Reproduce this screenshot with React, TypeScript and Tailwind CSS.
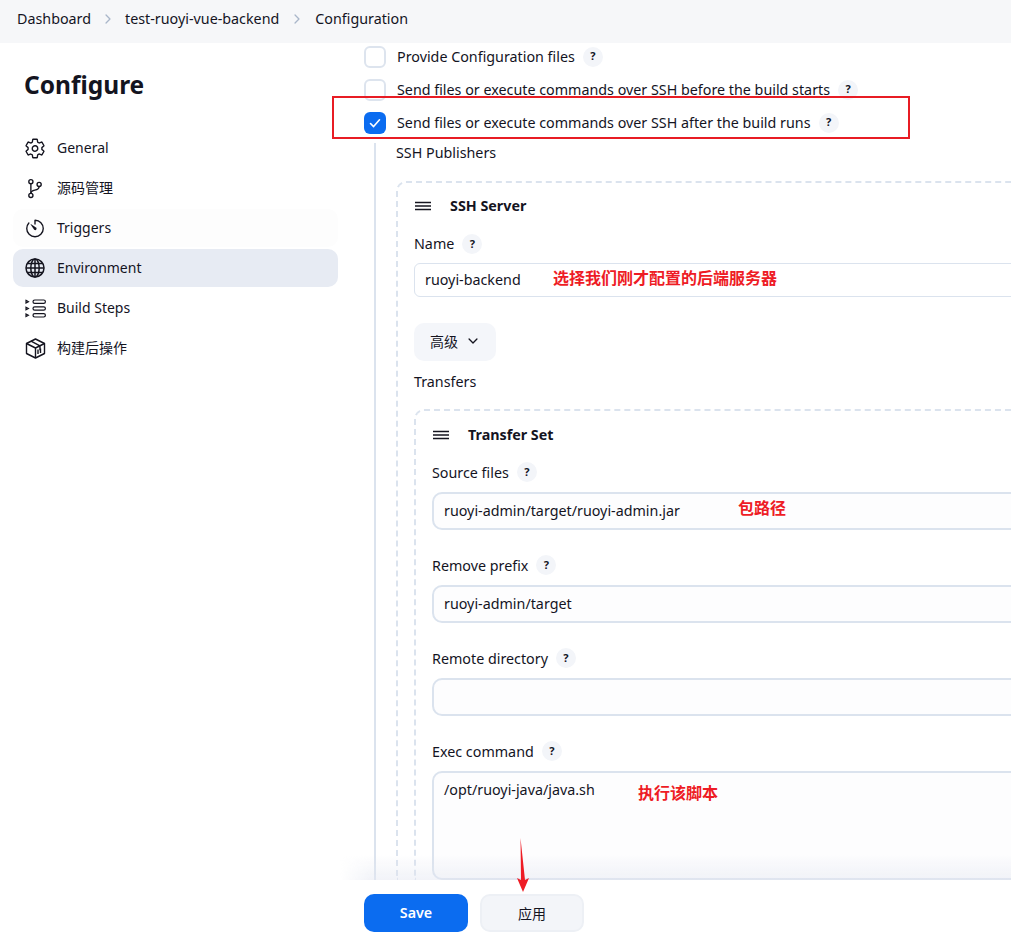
import React from "react";
import { IoSettingsOutline, IoGitBranchOutline, IoTimerOutline, IoChevronDown, IoChevronForward } from "react-icons/io5";

const font = { fontFamily: '"Noto Sans","Noto Sans CJK SC",sans-serif' };

function Help() {
  return (
    <span className="ml-2 inline-flex h-5 w-5 shrink-0 items-center justify-center rounded-full bg-[#f3f5f9] text-[11px] font-bold text-[#14141f]">?</span>
  );
}

function Check({ label, checked }: { label: string; checked?: boolean }) {
  return (
    <div className="flex h-[33px] items-center">
      {checked ? (
        <span className="flex h-[22px] w-[22px] items-center justify-center rounded-[6px] bg-[#0b6cf0]">
          <svg width="12" height="12" viewBox="0 0 12 12" fill="none" stroke="white" strokeWidth="1.6" strokeLinecap="round" strokeLinejoin="round"><path d="M1.5 6.5 4.6 9.6 10.5 2.8" /></svg>
        </span>
      ) : (
        <span className="h-[22px] w-[22px] rounded-[6px] border-2 border-[#dde4ee] bg-white" />
      )}
      <span className="ml-[11px] pt-[2px] text-[14.3px] leading-none text-[#14141f]">{label}</span>
      <Help />
    </div>
  );
}

function Handle() {
  return (
    <svg width="16" height="10" viewBox="0 0 16 10" stroke="#14141f" strokeWidth="1.3"><path d="M0 1.5H16M0 5H16M0 8.5H16" /></svg>
  );
}

function Field({ label, value, tall }: { label: string; value?: string; tall?: boolean }) {
  return (
    <div className="mb-[25px]">
      <div className="flex h-5 items-center text-[14.3px] text-[#14141f]"><span className="pt-[2px]">{label}</span><Help /></div>
      <div className={`mt-[10px] rounded-[10px] border-2 border-[#dbe3ee] bg-[#fdfdfe] px-[10px] text-[14.3px] text-[#14141f] ${tall ? "h-[109px] pt-[6px]" : "flex h-[38px] items-center pb-[1px]"}`}>{value}</div>
    </div>
  );
}

function Nav({ icon, label, cls }: { icon: React.ReactNode; label: string; cls?: string }) {
  return (
    <div className={`flex h-[38px] items-center gap-[11px] rounded-[10px] pl-[11px] text-[14px] text-[#14141f] ${cls ?? ""}`}>
      <span className="flex h-[22px] w-[22px] items-center justify-center">{icon}</span>
      <span className="pb-[2px]">{label}</span>
    </div>
  );
}

function Globe() {
  return (
    <svg width="20" height="20" viewBox="0 0 20 20" fill="none" stroke="#14141f" strokeWidth="1.5">
      <circle cx="10" cy="10" r="9" />
      <ellipse cx="10" cy="10" rx="4.2" ry="9" />
      <path d="M10 1V19M1 10H19M2.4 5.4H17.6M2.4 14.6H17.6" />
    </svg>
  );
}

function Steps() {
  return (
    <svg width="21" height="19" viewBox="0 0 21 19" fill="none" stroke="#14141f" strokeWidth="1.2">
      <rect x="8" y="1" width="12.4" height="3.4" rx="1.7" /><rect x="8" y="7.8" width="12.4" height="3.4" rx="1.7" /><rect x="8" y="14.6" width="12.4" height="3.4" rx="1.7" />
      <path d="M1 1.4 3.4 2.7 1 4ZM1 8.2 3.4 9.5 1 10.8ZM1 15 3.4 16.3 1 17.6Z" />
    </svg>
  );
}

function Box() {
  return (
    <svg width="21" height="21" viewBox="0 0 21 21" fill="none" stroke="#14141f" strokeWidth="1.4" strokeLinejoin="round">
      <path d="M10.5 1 19.5 5.5v10L10.5 20 1.5 15.5v-10Z" /><path d="M1.5 5.5 10.5 10 19.5 5.5M10.5 10V20M6 3.2 15 7.8v4.4" /><path d="M13 11.5v4.5M15.5 10.5v4.5" />
    </svg>
  );
}

export default function App() {
  return (
    <div className="relative h-[936px] w-[1011px] overflow-hidden bg-white" style={font}>
      <div className="flex h-[43px] items-center bg-[#f6f7f9] pb-[6px] pl-[17px] text-[14.3px] text-[#14141f]">
        <span>Dashboard</span>
        <IoChevronForward className="mx-[10px] mt-[1px] text-[#a9b6c9]" size={14} />
        <span>test-ruoyi-vue-backend</span>
        <IoChevronForward className="mx-[11px] mt-[1px] text-[#a9b6c9]" size={14} />
        <span>Configuration</span>
      </div>

      <div className="flex">
        <aside className="w-[364px] shrink-0 pl-[13px] pr-[26px]">
          <h1 className="mb-[26px] ml-[11px] mt-[24px] text-[24.5px] font-bold leading-[36px] text-[#14141f]">Configure</h1>
          <div className="flex flex-col gap-[2px]">
            <Nav icon={<IoSettingsOutline size={23} />} label="General" />
            <Nav icon={<IoGitBranchOutline size={23} />} label="源码管理" />
            <Nav icon={<IoTimerOutline size={23} />} label="Triggers" cls="bg-[#fdfdfd]" />
            <Nav icon={<Globe />} label="Environment" cls="bg-[#e7ebf3]" />
            <Nav icon={<Steps />} label="Build Steps" />
            <Nav icon={<Box />} label="构建后操作" />
          </div>
        </aside>

        <main className="-mt-[3px] w-[800px] shrink-0">
          <div>
            <Check label="Provide Configuration files" />
            <Check label="Send files or execute commands over SSH before the build starts" />
            <Check label="Send files or execute commands over SSH after the build runs" checked />
          </div>
          <div className="ml-[10px] mt-[4px] border-l-2 border-[#dbe3ee] pl-[20px]">
            <div className="text-[14.3px] leading-5 text-[#14141f]">SSH Publishers</div>
            <div className="mt-[18px] rounded-tl-[10px] border-l-2 border-t-2 border-dashed border-[#dbe3ee] pl-[16px] pt-[12px]">
              <div className="flex h-5 items-center text-[14.3px] font-bold text-[#14141f]">
                <span className="ml-[1px] mr-[19px] mt-[2px] flex"><Handle /></span><span className="pt-[2px]">SSH Server</span>
              </div>
              <div className="mt-[19px] flex h-5 items-center text-[14.3px] text-[#14141f]">Name<Help /></div>
              <div className="mt-[9px] flex h-[34px] items-center rounded-[6px] border border-[#dbe3ee] px-[10px] text-[14.3px] text-[#14141f]">ruoyi-backend</div>
              <div className="mt-[26px] flex h-[38px] w-[82px] items-center justify-center gap-[8px] rounded-[10px] bg-[#f4f6fa] pb-[2px] text-[14px] text-[#14141f]">高级<IoChevronDown size={14} /></div>
              <div className="mt-[11px] text-[14.3px] leading-5 text-[#14141f]">Transfers</div>
              <div className="mt-[17px] rounded-tl-[10px] border-l-2 border-t-2 border-dashed border-[#dbe3ee] pl-[16px] pt-[13px]">
                <div className="flex h-5 items-center text-[14.3px] font-bold text-[#14141f]">
                  <span className="ml-[1px] mr-[19px] mt-[2px] flex"><Handle /></span><span className="pt-[2px]">Transfer Set</span>
                </div>
                <div className="mt-[18px]">
                  <Field label="Source files" value="ruoyi-admin/target/ruoyi-admin.jar" />
                  <Field label="Remove prefix" value="ruoyi-admin/target" />
                  <Field label="Remote directory" />
                  <Field label="Exec command" value="/opt/ruoyi-java/java.sh" tall />
                </div>
              </div>
            </div>
          </div>
        </main>
      </div>

      {/* sticky save bar */}
      <div className="absolute bottom-[56px] left-[340px] right-0 h-[26px] bg-gradient-to-b from-[#e4e7f1]/0 to-[#e4e7f1]/50 [mask-image:linear-gradient(to_right,transparent,black_30px)]" />
      <div className="absolute bottom-0 left-[340px] right-0 flex h-[56px] gap-[12px] bg-white pl-[24px] pt-[14px]">
        <div className="flex h-[38px] w-[104px] items-center justify-center rounded-[10px] bg-[#0b6cf0] text-[14.3px] font-semibold text-white">Save</div>
        <div className="flex h-[38px] w-[104px] items-center justify-center rounded-[10px] border-2 border-[#edf0f5] bg-[#f3f5f9] text-[14px] text-[#14141f]">应用</div>
      </div>

      {/* annotations drawn over the screenshot */}
      <div className="absolute left-[332px] top-[96px] h-[43px] w-[578px] border-2 border-[#e81c24]" />
      <div className="absolute left-[553px] top-[268px] text-[16px] font-bold leading-5 text-[#ee1c25]">选择我们刚才配置的后端服务器</div>
      <div className="absolute left-[738px] top-[498px] text-[16px] font-bold leading-5 text-[#ee1c25]">包路径</div>
      <div className="absolute left-[638px] top-[783px] text-[16px] font-bold leading-5 text-[#ee1c25]">执行该脚本</div>
      <svg className="absolute left-[510px] top-[835px]" width="24" height="60" viewBox="0 0 24 60" fill="#ee1c25"><path d="M10.5 3 15 45 19 43 13 57 7 43 11 45Z" /></svg>
    </div>
  );
}
